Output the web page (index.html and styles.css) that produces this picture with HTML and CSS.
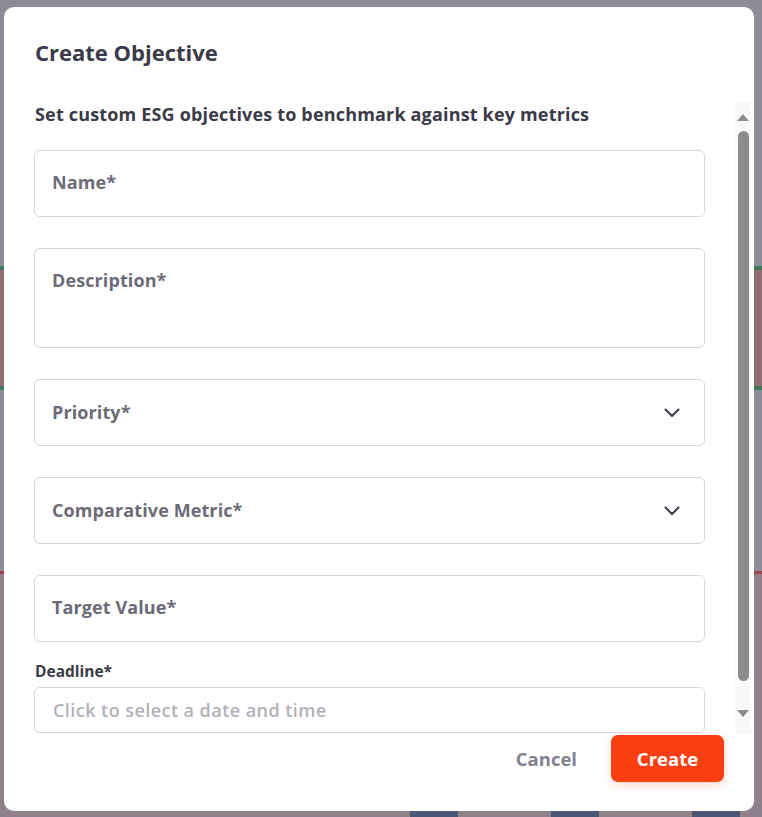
FILE: index.html
```html
<!DOCTYPE html>
<html lang="en">
<head>
<meta charset="utf-8">
<title>Create Objective</title>
<link rel="stylesheet" href="styles.css">
</head>
<body>
<div class="backdrop">
  <div class="bottom-bars">
    <span class="bar-gap bar-gap-a"></span><span class="bar"></span>
    <span class="bar-gap bar-gap-b"></span><span class="bar"></span>
    <span class="bar-gap bar-gap-b"></span><span class="bar"></span>
  </div>
</div>
<div class="modal" role="dialog" aria-labelledby="title">
  <h1 class="title" id="title">Create Objective</h1>
  <div class="scroll">
    <div class="scroll-content">
      <p class="intro">Set custom ESG objectives to benchmark against key metrics</p>
      <div class="field"><span class="label">Name*</span></div>
      <div class="field field-tall"><span class="label">Description*</span></div>
      <div class="field field-select"><span class="label">Priority*</span>
        <svg class="chevron" width="16" height="10" viewBox="0 0 16 10"><path d="M1.5 1.5 L8 8 L14.5 1.5" fill="none" stroke="#3b3a48" stroke-width="2" stroke-linecap="round" stroke-linejoin="round"/></svg>
      </div>
      <div class="field field-select"><span class="label">Comparative Metric*</span>
        <svg class="chevron" width="16" height="10" viewBox="0 0 16 10"><path d="M1.5 1.5 L8 8 L14.5 1.5" fill="none" stroke="#3b3a48" stroke-width="2" stroke-linecap="round" stroke-linejoin="round"/></svg>
      </div>
      <div class="field"><span class="label">Target Value*</span></div>
      <div class="deadline-label">Deadline*</div>
      <div class="date-input">Click to select a date and time</div>
    </div>
    <div class="scrollbar">
      <span class="arrow-up"></span>
      <span class="thumb"></span>
      <span class="arrow-down"></span>
    </div>
  </div>
  <div class="footer">
    <button class="btn btn-cancel">Cancel</button>
    <button class="btn btn-create">Create</button>
  </div>
</div>
</body>
</html>
```

FILE: styles.css
```css
html, body {
  margin: 0;
  padding: 0;
}
body {
  width: 762px;
  height: 817px;
  overflow: hidden;
  position: relative;
  font-family: "Open Sans", "Liberation Sans", sans-serif;
  background: linear-gradient(to bottom,
    #8e8a96 0, #8e8a96 266px,
    #3f7a5c 266px, #3f7a5c 270px,
    #906d72 270px, #906d72 386px,
    #3f7a5c 386px, #3f7a5c 390px,
    #8e8a96 390px, #8e8a96 571px,
    #a3444d 571px, #a3444d 574px,
    #8f8189 574px, #8f8189 100%);
  padding: 7px 8px 6px 4px;
  box-sizing: border-box;
}
.backdrop {
  position: absolute;
  left: 0;
  right: 0;
  bottom: 0;
  height: 6px;
}
.bottom-bars {
  display: flex;
  height: 6px;
}
.bar-gap-a { width: 410px; }
.bar-gap-b { width: 93px; }
.bar { width: 48px; background: #4a5675; }

.modal {
  position: relative;
  width: 750px;
  height: 804px;
  background: #ffffff;
  border-radius: 10px;
  box-sizing: border-box;
  padding: 31px 3px 29px 30px;
  display: flex;
  flex-direction: column;
}
.title {
  margin: 0 0 0 1px;
  font-size: 22px;
  line-height: 28px;
  font-weight: 700;
  color: #3b3a48;
}
.scroll {
  margin-top: 36px;
  height: 632px;
  display: flex;
}
.scroll-content {
  width: 671px;
  padding-right: 30px;
  padding-top: 0;
  overflow: hidden;
}
.intro {
  margin: 0 0 24px 1px;
  font-size: 18px;
  line-height: 24px;
  font-weight: 700;
  letter-spacing: 0.17px;
  color: #3b3a48;
}
.field {
  height: 67px;
  box-sizing: border-box;
  border: 1px solid #d6d6da;
  border-radius: 6px;
  padding: 19px 24px 0 17px;
  display: flex;
  align-items: flex-start;
  justify-content: space-between;
  margin-bottom: 31px;
}
.field-tall { height: 100px; }
.field-select { padding-top: 0; padding-bottom: 2px; align-items: center; }
.field-select .chevron { margin-top: 2px; }
.label {
  font-size: 18px;
  line-height: 24px;
  font-weight: 700;
  letter-spacing: 0.1px;
  color: #6c6b77;
}
.chevron { display: block; }
.deadline-label {
  margin-top: -12px;
  margin-left: 1px;
  font-size: 15.5px;
  line-height: 20px;
  font-weight: 700;
  color: #3b3a48;
}
.date-input {
  margin-top: 6px;
  height: 46px;
  box-sizing: border-box;
  border: 1px solid #d6d6da;
  border-radius: 6px;
  padding: 0 18px 1px;
  display: flex;
  align-items: center;
  font-size: 18px;
  font-weight: 600;
  letter-spacing: 0.45px;
  color: #b2b1b8;
}
.scrollbar {
  width: 16px;
  height: 632px;
  background: #f9f9f9;
  position: relative;
  display: flex;
  flex-direction: column;
  align-items: center;
}
.arrow-up {
  margin-top: 12px;
  width: 0;
  height: 0;
  border-left: 6px solid transparent;
  border-right: 6px solid transparent;
  border-bottom: 7px solid #8d8d8d;
}
.thumb {
  margin-top: 10px;
  width: 11px;
  height: 550px;
  border-radius: 6px;
  background: #8c8c8c;
}
.arrow-down {
  margin-top: 29px;
  width: 0;
  height: 0;
  border-left: 6px solid transparent;
  border-right: 6px solid transparent;
  border-top: 7px solid #8d8d8d;
}
.footer {
  margin-top: auto;
  padding-right: 27px;
  display: flex;
  justify-content: flex-end;
  align-items: center;
}
.btn {
  font-family: inherit;
  font-size: 18.5px;
  font-weight: 700;
  border: none;
  height: 47px;
  padding-bottom: 2px;
  border-radius: 7px;
  cursor: pointer;
}
.btn-cancel {
  background: transparent;
  color: #83838f;
  padding-left: 17px;
  padding-right: 17px;
  margin-right: 17px;
}
.btn-create {
  background: #f93e12;
  color: #ffffff;
  padding-left: 0;
  padding-right: 0;
  width: 113px;
  box-shadow: 0 3px 10px rgba(249, 62, 18, 0.22);
}
```
